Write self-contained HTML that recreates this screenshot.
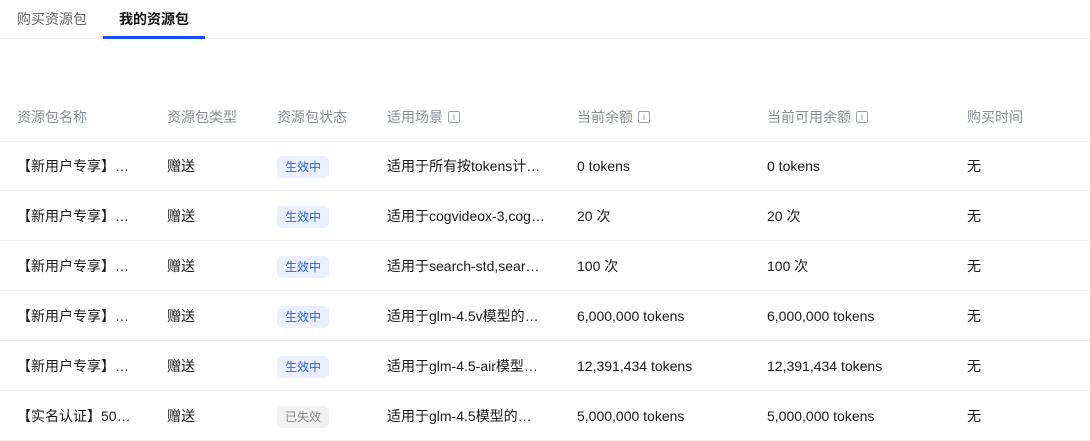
<!DOCTYPE html><html><head><meta charset="utf-8"><style>
*{margin:0;padding:0;box-sizing:border-box}
body{width:1090px;height:433px;overflow:hidden;background:#fff;font-family:"Liberation Sans","Noto Sans CJK SC",sans-serif;font-size:14px;color:#1a1a1a;position:relative}
.tabs{position:absolute;top:0;left:0;width:1090px;height:39px;border-bottom:1px solid #ececec}
.tab{position:absolute;top:9px;font-size:14px}
.t1{left:17px;color:#666}
.t2{left:119px;color:#111;font-weight:bold}
.ul{position:absolute;left:103px;top:36px;width:102px;height:3px;background:#1a4cff}
.row{position:absolute;left:0;width:1090px;height:50px;border-bottom:1px solid #f0f0f0}
.c{position:absolute;top:0;line-height:50px;white-space:nowrap}
.h .c{color:#8a8f99}
.info{display:inline-block;width:12px;height:12px;border:1px solid #9aa0aa;border-radius:2px;font-size:9px;line-height:10px;text-align:center;color:#8a8f99;margin-left:5px;vertical-align:2px}
.b{display:inline-block;height:22px;line-height:22px;padding:0 8px;border-radius:5px;font-size:12px;background:#eaf0ff;color:#2b5cff;vertical-align:middle}
.b.x{background:#f2f2f2;color:#888}
</style></head><body>
<div class="tabs"><span class="tab t1">购买资源包</span><span class="tab t2">我的资源包</span><div class="ul"></div></div>
<div class="row h" style="top:92px">
<span class="c" style="left:17px">资源包名称</span><span class="c" style="left:167px">资源包类型</span><span class="c" style="left:277px">资源包状态</span><span class="c" style="left:387px">适用场景<span class="info">i</span></span><span class="c" style="left:577px">当前余额<span class="info">i</span></span><span class="c" style="left:767px">当前可用余额<span class="info">i</span></span><span class="c" style="left:967px">购买时间</span></div>
<div class="row" style="top:141px"><span class="c" style="left:17px">【新用户专享】…</span><span class="c" style="left:167px">赠送</span><span class="c" style="left:277px"><span class="b">生效中</span></span><span class="c" style="left:387px">适用于所有按tokens计…</span><span class="c" style="left:577px">0 tokens</span><span class="c" style="left:767px">0 tokens</span><span class="c" style="left:967px">无</span></div>
<div class="row" style="top:191px"><span class="c" style="left:17px">【新用户专享】…</span><span class="c" style="left:167px">赠送</span><span class="c" style="left:277px"><span class="b">生效中</span></span><span class="c" style="left:387px">适用于cogvideox-3,cog…</span><span class="c" style="left:577px">20 次</span><span class="c" style="left:767px">20 次</span><span class="c" style="left:967px">无</span></div>
<div class="row" style="top:241px"><span class="c" style="left:17px">【新用户专享】…</span><span class="c" style="left:167px">赠送</span><span class="c" style="left:277px"><span class="b">生效中</span></span><span class="c" style="left:387px">适用于search-std,sear…</span><span class="c" style="left:577px">100 次</span><span class="c" style="left:767px">100 次</span><span class="c" style="left:967px">无</span></div>
<div class="row" style="top:291px"><span class="c" style="left:17px">【新用户专享】…</span><span class="c" style="left:167px">赠送</span><span class="c" style="left:277px"><span class="b">生效中</span></span><span class="c" style="left:387px">适用于glm-4.5v模型的…</span><span class="c" style="left:577px">6,000,000 tokens</span><span class="c" style="left:767px">6,000,000 tokens</span><span class="c" style="left:967px">无</span></div>
<div class="row" style="top:341px"><span class="c" style="left:17px">【新用户专享】…</span><span class="c" style="left:167px">赠送</span><span class="c" style="left:277px"><span class="b">生效中</span></span><span class="c" style="left:387px">适用于glm-4.5-air模型…</span><span class="c" style="left:577px">12,391,434 tokens</span><span class="c" style="left:767px">12,391,434 tokens</span><span class="c" style="left:967px">无</span></div>
<div class="row" style="top:391px"><span class="c" style="left:17px">【实名认证】50…</span><span class="c" style="left:167px">赠送</span><span class="c" style="left:277px"><span class="b x">已失效</span></span><span class="c" style="left:387px">适用于glm-4.5模型的…</span><span class="c" style="left:577px">5,000,000 tokens</span><span class="c" style="left:767px">5,000,000 tokens</span><span class="c" style="left:967px">无</span></div>
</body></html>
